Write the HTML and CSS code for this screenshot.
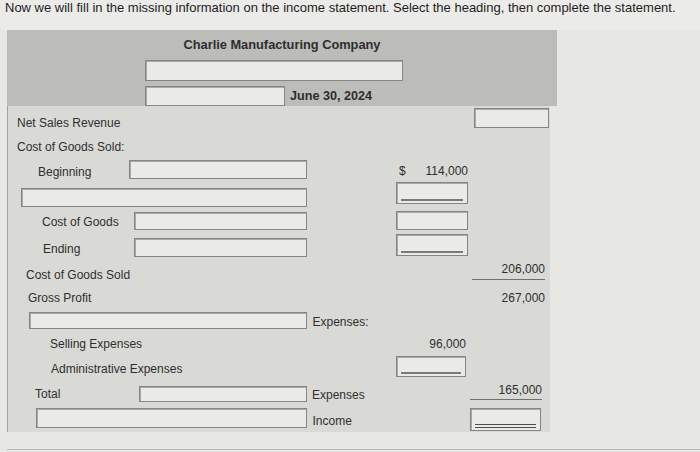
FILE: index.html
```html
<!DOCTYPE html>
<html>
<head>
<meta charset="utf-8">
<link rel="stylesheet" href="styles.css">
</head>
<body>
<p class="intro">Now we will fill in the missing information on the income statement. Select the heading, then complete the statement.</p>
<div class="sheet">
  <div class="head">
    <div class="title">Charlie Manufacturing Company</div>
    <div class="hrow"><div class="box w258 h21"></div></div>
    <div class="hrow gap5"><div class="box w140 h20"></div><span class="date">June 30, 2024</span></div>
  </div>
  <div class="body">
    <div class="row r1">
      <div class="a"><span class="lab pl9 mt10">Net Sales Revenue</span><span class="suf"></span></div>
      <div class="b"></div>
      <div class="c"><div class="box w75 h20 ml6 mt2"></div></div>
    </div>
    <div class="row r2">
      <div class="a"><span class="lab pl9 mt1">Cost of Goods Sold:</span><span class="suf"></span></div>
      <div class="b"></div>
      <div class="c"></div>
    </div>
    <div class="row r3">
      <div class="a"><span class="lab pl30 mt6">Beginning</span><div class="box w178 h19 mt1"></div><span class="suf"></span></div>
      <div class="b cash mt5"><span>$</span><span>114,000</span></div>
      <div class="c"></div>
    </div>
    <div class="row r4">
      <div class="a"><span class="lab pl13"></span><div class="box w286 h19 mt7"></div><span class="suf"></span></div>
      <div class="b"><div class="box ul w72 h22 mt1"><div class="line"></div></div></div>
      <div class="c"></div>
    </div>
    <div class="row r5">
      <div class="a"><span class="lab pl34 mt5">Cost of Goods</span><div class="box w173 h18 mt2"></div><span class="suf"></span></div>
      <div class="b"><div class="box w72 h19 mt1"></div></div>
      <div class="c"></div>
    </div>
    <div class="row r6">
      <div class="a"><span class="lab pl35 mt10">Ending</span><div class="box w173 h19 mt6"></div><span class="suf"></span></div>
      <div class="b"><div class="box ul w72 h22 mt2"><div class="line"></div></div></div>
      <div class="c"></div>
    </div>
    <div class="row r7">
      <div class="a"><span class="lab pl18 mt10">Cost of Goods Sold</span><span class="suf"></span></div>
      <div class="b"></div>
      <div class="c"><div class="num under w73 ml4 mt4">206,000</div></div>
    </div>
    <div class="row r8">
      <div class="a"><span class="lab pl20 mt8">Gross Profit</span><span class="suf"></span></div>
      <div class="b"></div>
      <div class="c"><div class="num w73 ml4 mt8">267,000</div></div>
    </div>
    <div class="row r9">
      <div class="a"><span class="lab pl21"></span><div class="box w280 h17 mt3"></div><span class="suf mt6">Expenses:</span></div>
      <div class="b"></div>
      <div class="c"></div>
    </div>
    <div class="row r10">
      <div class="a"><span class="lab pl42 mt6">Selling Expenses</span><span class="suf"></span></div>
      <div class="b"><div class="num w70 mt6">96,000</div></div>
      <div class="c"></div>
    </div>
    <div class="row r11">
      <div class="a"><span class="lab pl43 mt9">Administrative Expenses</span><span class="suf"></span></div>
      <div class="b"><div class="box ul w70 h21 mt3"><div class="line"></div></div></div>
      <div class="c"></div>
    </div>
    <div class="row r12">
      <div class="a"><span class="lab pl27 mt8">Total</span><div class="box w168 h16 mt7"></div><span class="suf mt9">Expenses</span></div>
      <div class="b"></div>
      <div class="c"><div class="num under2 w72 ml2 mt4">165,000</div></div>
    </div>
    <div class="row r13">
      <div class="a"><span class="lab pl28"></span><div class="box w273 h20 mt3"></div><span class="suf mt9">Income</span></div>
      <div class="b"></div>
      <div class="c"><div class="box ul dbl w71 h23 ml2 mt3"><div class="line"></div></div></div>
    </div>
  </div>
  <div class="foot"></div>
</div>
</body>
</html>
```
FILE: styles.css
```css
html, body {
  margin: 0;
  padding: 0;
}
body {
  width: 700px;
  height: 452px;
  overflow: hidden;
  background: #e7e7e4;
  font-family: "Liberation Sans", Arial, sans-serif;
  color: #2f2f2f;
}
.intro {
  margin: 0;
  padding: 0 0 0 5px;
  height: 30px;
  line-height: 15px;
  font-size: 13px;
  color: #1e1e1e;
  background: #ebebe9;
}
.sheet {
  margin-left: 7px;
  width: 550px;
}
.head {
  height: 76px;
  background: #bcbcb9;
  padding-top: 8px;
  box-sizing: border-box;
}
.title {
  text-align: center;
  font-weight: bold;
  font-size: 12.8px;
  line-height: 14px;
  color: #2e2e2e;
  height: 14px;
  margin-bottom: 8px;
}
.hrow {
  display: flex;
  align-items: center;
  padding-left: 138px;
}
.hrow.gap5 { margin-top: 5px; }
.date {
  font-weight: bold;
  font-size: 12.6px;
  color: #2e2e2e;
  margin-left: 5px;
}
.body {
  width: 543px;
  height: 326px;
  background: #d9d9d6;
  border-left: 1px solid #a3a3a0;
  box-sizing: border-box;
}
.foot {
  height: 17px;
  width: 693px;
  border-bottom: 1px solid #b9b9b6;
}
.row {
  display: grid;
  grid-template-columns: 388px 72px 1fr;
  align-items: start;
}
.r1 { height: 33px; }
.r2 { height: 20px; }
.r3 { height: 22px; }
.r4 { height: 29px; }
.r5 { height: 22px; }
.r6 { height: 26px; }
.r7 { height: 25px; }
.r8 { height: 26px; }
.r9 { height: 22px; }
.r10 { height: 22px; }
.r11 { height: 26px; }
.r12 { height: 26px; }
.r13 { height: 27px; }

.a {
  display: flex;
  align-items: flex-start;
}
.lab {
  flex: 1;
  font-size: 12px;
  line-height: 14px;
  white-space: nowrap;
}
.suf {
  width: 84px;
  padding-left: 5px;
  font-size: 12px;
  line-height: 14px;
}
.box {
  box-sizing: border-box;
  background: #eaeae8;
  border: 1px solid #858582;
  box-shadow: inset 1px 1px 0 #a9a9a6;
}
.box.ul {
  display: flex;
  flex-direction: column;
  justify-content: flex-end;
  padding: 0 4px 2px 4px;
}
.box .line {
  border-bottom: 2px solid #7a7a78;
}
.box.dbl .line {
  border-bottom: 4px double #4e4e4c;
}
.cash {
  display: flex;
  justify-content: space-between;
  padding-left: 3px;
  font-size: 12px;
  line-height: 14px;
}
.num {
  font-size: 12px;
  line-height: 14px;
  text-align: right;
}
.num.under {
  padding-bottom: 3px;
  border-bottom: 1px solid #6f6f6d;
}
.num.under2 {
  padding-bottom: 2px;
  border-bottom: 1px solid #6f6f6d;
}

.w258 { width: 258px; }
.w140 { width: 140px; }
.w75 { width: 75px; }
.w178 { width: 178px; }
.w286 { width: 286px; }
.w173 { width: 173px; }
.w280 { width: 280px; }
.w168 { width: 168px; }
.w273 { width: 273px; }
.w73 { width: 73px; }
.w72 { width: 72px; }
.w71 { width: 71px; }
.w70 { width: 70px; }
.h16 { height: 16px; }
.h17 { height: 17px; }
.h18 { height: 18px; }
.h19 { height: 19px; }
.h20 { height: 20px; }
.h21 { height: 21px; }
.h22 { height: 22px; }
.h23 { height: 23px; }
.ml2 { margin-left: 2px; }
.ml4 { margin-left: 4px; }
.ml6 { margin-left: 6px; }
.mt1 { margin-top: 1px; }
.mt2 { margin-top: 2px; }
.mt3 { margin-top: 3px; }
.mt4 { margin-top: 4px; }
.mt5 { margin-top: 5px; }
.mt6 { margin-top: 6px; }
.mt7 { margin-top: 7px; }
.mt8 { margin-top: 8px; }
.mt9 { margin-top: 9px; }
.mt10 { margin-top: 10px; }
.pl9 { padding-left: 9px; }
.pl13 { padding-left: 13px; }
.pl18 { padding-left: 18px; }
.pl20 { padding-left: 20px; }
.pl21 { padding-left: 21px; }
.pl27 { padding-left: 27px; }
.pl28 { padding-left: 28px; }
.pl30 { padding-left: 30px; }
.pl34 { padding-left: 34px; }
.pl35 { padding-left: 35px; }
.pl42 { padding-left: 42px; }
.pl43 { padding-left: 43px; }
```
